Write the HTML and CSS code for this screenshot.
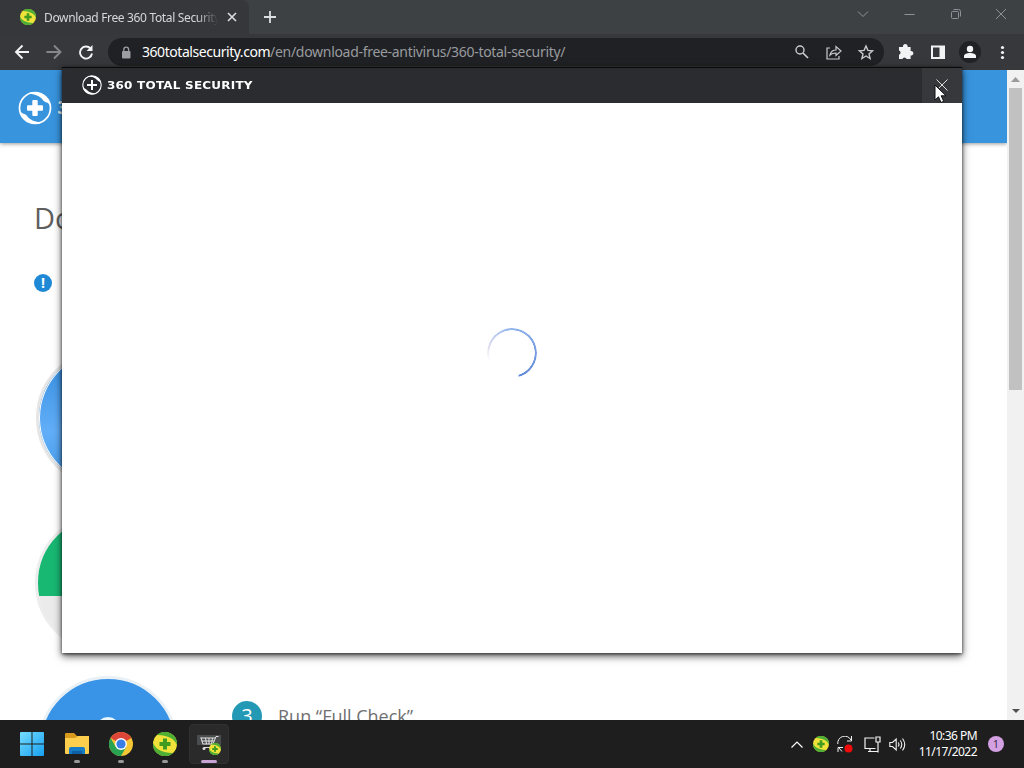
FILE: index.html
```html
<!DOCTYPE html>
<html lang="en">
<head>
<meta charset="utf-8">
<title>Download Free 360 Total Security</title>
<link rel="stylesheet" href="styles.css">
</head>
<body>
<svg width="0" height="0" class="defs">
  <defs>
    <symbol id="shield" viewBox="0 0 24 24">
      <circle cx="12" cy="12" r="12" fill="#f0e23a"/>
      <path d="M4 3A12 12 0 0 1 24 13C22 8 17 3.500 4 3ZM20 21A12 12 0 0 1 0 11C2 16 7 20.500 20 21Z" fill="#4fae34"/>
      <path d="M10 6.500h4V10h3.500v4H14v3.500h-4V14H6.500v-4H10z" fill="#3f9c20"/>
    </symbol>
    <symbol id="brand" viewBox="0 0 34 34">
      <circle cx="17" cy="17" r="15.500" fill="none" stroke="#fff" stroke-width="1.700"/>
      <path d="M10 2.500C19-2 30 4 32.500 15C30 10 27 12.500 24.500 8.500C22 5 17 3 10 2.500ZM1.500 19C4 24 7 21.500 9.500 25.500C12 29 17 31 24 31.500C15 36 4 30 1.500 19Z" fill="#fff"/>
      <path d="M14.300 10q0-1 1-1h3.400q1 0 1 1v4.300H24q1 0 1 1v3.400q0 1-1 1h-4.300V24q0 1-1 1h-3.400q-1 0-1-1v-4.300H10q-1 0-1-1v-3.400q0-1 1-1h4.300z" fill="#fff"/>
    </symbol>
    <symbol id="brand-thin" viewBox="0 0 20 20">
      <circle cx="10" cy="10" r="9.200" fill="none" stroke="#fff" stroke-width="1.100"/>
      <path d="M5.500 1.600C11-1 18 2 19.300 9C17.500 5.500 16 6.500 14.500 4.500C13 2.500 10 1.800 5.500 1.600ZM.7 11C2.500 14.500 4 13.500 5.500 15.500C7 17.500 10 18.200 14.500 18.400C9 21 2 18 .7 11Z" fill="#fff"/>
      <path d="M9 5h2v4h4v2h-4v4H9v-4H5V9h4z" fill="#fff"/>
    </symbol>
  </defs>
</svg>
<div class="screen">
  <header class="tabstrip">
    <div class="tab">
      <svg class="favicon" width="16" height="16"><use href="#shield"/></svg>
      <span class="tab-title">Download Free 360 Total Security</span>
      <svg class="tab-close" width="10" height="10" viewBox="0 0 10 10"><path d="M1 1l8 8M9 1l-8 8" stroke="#dcdfe2" stroke-width="1.600"/></svg>
    </div>
    <svg class="new-tab" width="12" height="12" viewBox="0 0 12 12"><path d="M6 0v12M0 6h12" stroke="#dcdfe2" stroke-width="1.800"/></svg>
    <svg class="caption" width="154" height="14" viewBox="0 0 154 14" fill="none" stroke="#8f9296"><path d="M1 4.500l5 5 5-5M47.500 7.500h10M95.500 4.500h5q1 0 1 1v5q0 1-1 1h-5q-1 0-1-1v-5q0-1 1-1zM96.500 2.500h5q2 0 2 2v5M139 2l10 10M149 2l-10 10"/></svg>
  </header>
  <nav class="toolbar">
    <svg class="nav-icons" width="80" height="16" viewBox="0 0 80 16" fill="none" stroke-width="1.900">
      <path d="M15 8H2.500M8.500 1.500L2 8l6.500 6.500" stroke="#f1f3f4"/>
      <path d="M32.500 8H46M40 1.500L46.500 8 40 14.500" stroke="#85888b"/>
      <path d="M76.500 4.500A6 6 0 1 0 78 9.500" stroke="#f1f3f4"/><path d="M78.500 1v6h-6z" fill="#f1f3f4"/>
    </svg>
    <div class="omnibox">
      <svg width="10" height="13" viewBox="0 0 10 13"><rect x="1" y="5" width="8.500" height="7.500" rx="1" fill="#9b9ea2"/><path d="M2.800 6V3.500a2.400 2.400 0 0 1 4.800 0V6" fill="none" stroke="#9b9ea2" stroke-width="1.300"/></svg>
      <span class="url"><b>360totalsecurity.com</b>/en/download-free-antivirus/360-total-security/</span>
      <svg class="omni-icons" width="80" height="18" viewBox="0 0 80 18" fill="none" stroke="#c8cbce" stroke-width="1.400">
        <circle cx="6" cy="7" r="4"/><path d="M9 10l5 5" stroke-width="1.700"/>
        <path d="M36 5h-3v11h12v-3M36 12c1-4 4-5 6-5V3.500l5 4.500-5 4.500V10c-3 0-4 0-6 2z" stroke-width="1.200"/>
        <path d="M72 3l1.900 4.400 4.700.4-3.600 3.100 1.100 4.600-4.100-2.500-4.100 2.500 1.100-4.600-3.600-3.100 4.700-.4z"/>
      </svg>
    </div>
    <svg class="tools" width="112" height="24" viewBox="0 0 112 24">
      <path d="M2 8h4a2.400 2.400 0 1 1 4.600 0h3v4a2.300 2.300 0 1 1 0 4.500V20h-4a2.200 2.200 0 0 0-4.200 0H2v-4.200a2.200 2.200 0 0 0 0-4.200z" transform="translate(0 -1)" fill="#f1f3f4"/>
      <path d="M35 6.500h12v11.500H35z" fill="none" stroke="#f1f3f4" stroke-width="2"/><path d="M42.500 6H47v13h-4.500z" fill="#f1f3f4"/>
      <circle cx="73" cy="12" r="11" fill="#202124"/><circle cx="73" cy="9" r="3.200" fill="#f1f3f4"/><path d="M67 18v-2c0-4 12-4 12 0v2z" fill="#f1f3f4"/>
      <g fill="#f1f3f4"><circle cx="105.500" cy="7.500" r="1.600"/><circle cx="105.500" cy="12.500" r="1.600"/><circle cx="105.500" cy="17.500" r="1.600"/></g>
    </svg>
  </nav>
  <div class="viewport">
    <main class="page">
      <div class="site-header"><svg width="34" height="34"><use href="#brand"/></svg><span>3</span></div>
      <h1>Do</h1>
      <div class="notice">!</div>
      <div class="step-image scan"></div>
      <div class="step-image install"></div>
      <div class="step">
        <div class="step-image check"><i></i></div>
        <span class="step-number">3</span>
        <span class="step-text">Run “Full Check”</span>
      </div>
    </main>
    <div class="scrollbar">
      <svg width="9" height="5" viewBox="0 0 9 5"><path d="M0 5L4.500 0 9 5z" fill="#9b9b9b"/></svg>
      <div class="thumb"></div>
      <svg class="down" width="8" height="4" viewBox="0 0 8 4"><path d="M0 0h8L4 4z" fill="#505050"/></svg>
    </div>
  </div>
  <footer class="taskbar">
    <svg class="start" width="24" height="24" viewBox="0 0 24 24"><defs><linearGradient id="win" x2="1" y2="1"><stop stop-color="#75dcff"/><stop offset="1" stop-color="#16a0f0"/></linearGradient></defs><path d="M1 0h10.500v11.500H0V1q0-1 1-1zM12.500 0H23q1 0 1 1v10.500H12.500zM0 12.500h11.500V24H1q-1 0-1-1zM12.500 12.500H24V23q0 1-1 1H12.500z" fill="url(#win)"/></svg>
    <div class="app"><svg width="26" height="24" viewBox="0 0 26 24"><path d="M1 2q0-1 1-1h8l3 3h11q1 0 1 1v6H1z" fill="#d9991d"/><path d="M1 6h10l3-2h11v17q0 1-1 1H2q-1 0-1-1z" fill="#fbce4d"/><path d="M5 22v-5q0-2 2-2h12q2 0 2 2v5z" fill="#167bc5"/><path d="M8 19h10v3H8z" fill="#0e5fa4"/></svg></div>
    <div class="app"><svg width="24" height="24" viewBox="0 0 24 24"><circle cx="12" cy="12" r="12" fill="#f6c734"/><path d="M12 12L1.600 6A12 12 0 0 1 22.400 6z" fill="#dd4539"/><path d="M1.600 6A12 12 0 0 0 12 24l5.200-9L12 12 6.800 15z" fill="#29a352"/><circle cx="12" cy="12" r="6" fill="#fff"/><circle cx="12" cy="12" r="4.600" fill="#397de7"/></svg></div>
    <div class="app"><svg width="24" height="24"><use href="#shield"/></svg></div>
    <div class="app active"><svg width="26" height="24" viewBox="0 0 26 24"><path d="M1 3h24v10H1z" fill="#4a4d4e"/><path d="M4.500 6H19M5.500 9h12.500M6.500 12H17l3-7.500h2.500M5 5.500l2 6.500M9.500 6l1 6M13 6v6M16.500 6l-1 6" fill="none" stroke="#e2e2e2"/><path d="M8 15.500h7" stroke="#ddd" fill="none"/><circle cx="8" cy="16.500" r="1.500" fill="#ddd"/><svg x="13" y="11" width="12" height="12"><use href="#shield"/></svg></svg></div>
    <div class="tray">
      <svg width="12" height="7" viewBox="0 0 12 7"><path d="M.5 6.500L6 1l5.500 5.500" fill="none" stroke="#fff" stroke-width="1.200"/></svg>
      <svg class="tray-shield" width="16" height="16"><use href="#shield"/></svg>
      <svg class="sync" width="16" height="17" viewBox="0 0 16 17" fill="none" stroke="#f2f2f2"><path d="M.8 8A7 7 0 0 1 14 4M14.500 0v5H10M1 16v-4.500h5M2 12l3 3.500"/><circle cx="11.500" cy="12.500" r="4" fill="#f00b0b" stroke="none"/></svg>
      <svg class="net" width="17" height="17" viewBox="0 0 17 17" fill="none" stroke="#f2f2f2" stroke-width="1.200"><path d="M10.500 2H1v10.500h10.500M4 15.500h8M6 12.500v3M12 1h4v5h-4zM14 6v10.500M10 15.500h4"/></svg>
      <svg class="volume" width="17" height="15" viewBox="0 0 17 15" fill="none" stroke="#f2f2f2" stroke-width="1.100"><path d="M.8 5.500h2.700L7.200 2v11L3.500 9.500H.8zM9.200 5.500q1.500 2 0 4M11.300 3.500q3 4 0 8M13.500 1.500q4.500 6 0 12"/></svg>
      <div class="clock"><span>10:36 PM</span><span>11/17/2022</span></div>
      <span class="badge">1</span>
    </div>
  </footer>
  <section class="installer">
    <div class="titlebar">
      <svg width="20" height="20"><use href="#brand-thin"/></svg>
      <span class="product">360 TOTAL SECURITY</span>
      <button class="close" aria-label="Close"><svg width="12" height="12" viewBox="0 0 12 12"><path d="M.5.5l11 11M11.500.5l-11 11" stroke="#dedede" stroke-width="1"/></svg></button>
    </div>
    <div class="loading"><div class="spinner"></div></div>
  </section>
  <svg class="cursor" width="13" height="20" viewBox="0 0 13 20"><path d="M1 1v15l3.500-3.200L7 18.500l2.700-1.200-2.500-5.500H12z" fill="#fff" stroke="#111" stroke-width="1"/></svg>
</div>
</body>
</html>
```
FILE: styles.css
```css
* { box-sizing: border-box; }
body { margin: 0; font-family: "Open Sans", "Noto Sans", sans-serif; }
svg { display: block; flex: none; }
.defs { position: absolute; }
.screen { position: relative; width: 1024px; height: 768px; overflow: hidden; display: flex; flex-direction: column; }

.tabstrip { height: 34px; flex: none; background: #3d4144; display: flex; align-items: center; }
.tab { width: 249px; height: 34px; background: #36373a; display: flex; align-items: center; padding-left: 20px; border-radius: 0 7px 0 0; }
.tab-title { width: 174px; margin-left: 8px; overflow: hidden; white-space: nowrap; font: 12px "Noto Sans", sans-serif; letter-spacing: -.34px; color: #d5d7d9; -webkit-mask-image: linear-gradient(90deg, #000 88%, transparent); mask-image: linear-gradient(90deg, #000 88%, transparent); }
.tab-close { margin-left: 9px; }
.new-tab { margin-left: 15px; }
.caption { margin: -6px 13px 0 auto; }

.toolbar { height: 36px; flex: none; background: #37383b; display: flex; align-items: center; padding-left: 14px; }
.omnibox { width: 776px; height: 28px; margin-left: 14px; border-radius: 14px; background: #202124; display: flex; align-items: center; padding: 0 10px 0 13px; }
.url { margin: -1px 0 0 11px; font: 14px "Noto Sans", sans-serif; letter-spacing: -.3px; color: #989b9f; white-space: nowrap; }
.url b { font-weight: 400; color: #fff; letter-spacing: -.45px; }
.omni-icons { margin-left: auto; }
.tools { margin-left: 13px; }

.viewport { height: 650px; flex: none; display: flex; background: #fff; overflow: hidden; }
.page { flex: 1; height: 650px; overflow: hidden; }
.site-header { height: 73px; background: #3994de; display: flex; align-items: center; padding: 2px 0 0 18px; box-shadow: 0 1px 4px #0006; }
.site-header span { margin-left: 5px; color: #fff; font: bold 18px "DejaVu Sans", sans-serif; }
h1 { margin: 54px 0 0 34px; font-size: 29px; line-height: 42px; font-weight: 400; color: #5f5f5f; }
.notice { width: 18px; height: 18px; margin: 35px 0 0 34px; border-radius: 50%; background: #2089d6; color: #fff; font-size: 14px; font-weight: 700; line-height: 18px; text-align: center; }
.step-image { width: 140px; height: 140px; border-radius: 50%; border: 3px solid #e6e6e6; margin-left: 35px; }
.scan { margin: 56px 0 0 36px; background: linear-gradient(#328bdd, #62aef8 60%, #3f98e8); box-shadow: inset 0 0 0 1px #fff; }
.install { margin-top: 25px; background: linear-gradient(#18b873 80px, #ebebeb 80px); border-color: #ededed; }
.step { display: flex; align-items: flex-start; margin-top: 22px; }
.check { flex: none; margin: 1px 0 0 38px; background: #3994e7; padding-top: 38px; border-color: #e9f1f7; }
.check i { display: block; width: 24px; height: 24px; margin: 0 auto; border-radius: 50%; background: #e8f7ff; }
.step-number { width: 30px; height: 30px; margin: 26px 0 0 54px; border-radius: 50%; background: #2499b5; color: #fff; font-size: 20px; line-height: 29px; text-align: center; }
.step-text { margin: 28px 0 0 16px; font-size: 18px; line-height: 27px; color: #707070; white-space: nowrap; }

.scrollbar { width: 17px; height: 650px; background: #f1f1f1; display: flex; flex-direction: column; align-items: center; padding: 7px 0; }
.thumb { width: 13px; height: 302px; margin-top: 6px; background: #c1c1c1; }
.down { margin-top: auto; }

.taskbar { height: 48px; flex: none; background: #1e1e1e; display: flex; align-items: center; padding-left: 20px; }
.start { margin-right: 13px; }
.app { width: 40px; height: 40px; margin-right: 4px; display: flex; flex-direction: column; align-items: center; padding-top: 8px; border-radius: 4px; }
.app::after { content: ""; width: 6px; height: 3px; margin-top: 4px; border-radius: 2px; background: #999; }
.active { background: #2a2a2a; border: 1px solid #303030; padding-top: 7px; }
.active::after { width: 16px; background: #c9a3d3; }
.tray { margin-left: auto; padding-right: 20px; display: flex; align-items: center; }
.tray-shield { margin-left: 10px; }
.sync { margin-left: 8px; }
.net { margin-left: 11px; }
.volume { margin-left: 8px; }
.clock { width: 71px; display: flex; flex-direction: column; align-items: flex-end; font: 12px/16px "Noto Sans", sans-serif; letter-spacing: -.55px; color: #fff; white-space: nowrap; }
.badge { width: 16px; height: 16px; margin-left: 11px; border-radius: 50%; background: #d3a0e2; color: #33253a; font-size: 11px; line-height: 16px; text-align: center; }

.installer { position: absolute; left: 62px; top: 67px; width: 900px; height: 586px; background: #fff; display: flex; flex-direction: column; box-shadow: 0 3px 8px #000a, 0 1px 3px #0009; }
.titlebar { height: 36px; flex: none; background: #2b2c30; border-top: 1px solid #090909; display: flex; align-items: center; padding: 0 0 1px 20px; }
.product { margin-left: 5px; color: #fff; font: bold 11px "DejaVu Sans", sans-serif; letter-spacing: .2px; white-space: nowrap; transform: scaleX(1.09); transform-origin: left; }
.close { width: 40px; height: 35px; margin: 1px 0 0 auto; padding: 0 0 2px; border: 0; background: #37383c; display: flex; align-items: center; justify-content: center; }
.loading { flex: 1; display: flex; justify-content: center; padding-top: 225px; }
.spinner { width: 50px; height: 50px; border-radius: 50%; background: conic-gradient(#8fb3ec, #6089d8 45%, transparent 46%, transparent 70%, #e5e1f0 78%, #8fb3ec); -webkit-mask-image: radial-gradient(circle, transparent 22.500px, #000 23px); mask-image: radial-gradient(circle, transparent 22.500px, #000 23px); }
.cursor { position: absolute; left: 934px; top: 84px; }
```
